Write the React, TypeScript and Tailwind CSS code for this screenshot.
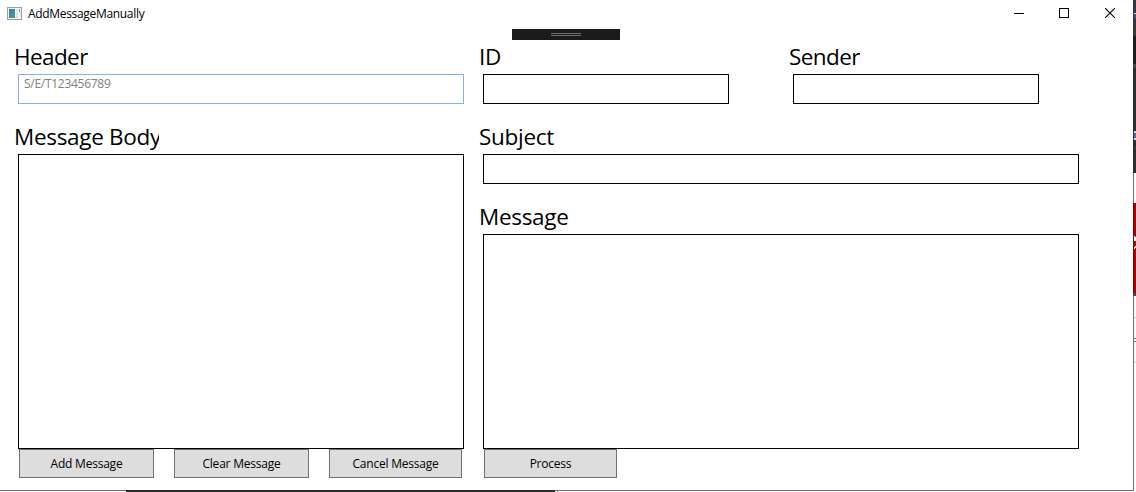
import type { ReactNode } from "react";

function Field({ label, tracking, children }: { label: string; tracking: string; children: ReactNode }) {
  return (
    <label className="flex flex-col">
      <span className={`-ml-1 h-8 self-start overflow-hidden whitespace-nowrap text-[22.5px] leading-[29px] ${tracking}`}>{label}</span>
      {children}
    </label>
  );
}

function ActionButton({ label, width }: { label: string; width: string }) {
  return (
    <button className={`h-[29px] border border-[#707070] bg-[#dddddd] text-[12px] leading-none tracking-[-0.22px] whitespace-nowrap ${width}`}>
      {label}
    </button>
  );
}

function TitleBar() {
  return (
    <header className="flex h-[29px] shrink-0 items-start justify-between">
      <div className="flex items-center gap-[6px] pt-[5px] pl-[7px]">
        <svg width="15" height="13" viewBox="0 0 15 13" shapeRendering="crispEdges">
          <defs>
            <linearGradient id="pane" x1="0" y1="0" x2="1" y2="1">
              <stop offset="0" stopColor="#3d72b8" />
              <stop offset="1" stopColor="#4aa58a" />
            </linearGradient>
          </defs>
          <rect x=".5" y=".5" width="14" height="12" fill="#f3f3f3" stroke="#9b9fa1" />
          <rect x="2" y="2" width="6" height="9" fill="url(#pane)" />
          <rect x="9" y="2" width="2" height="9" fill="#dfe3e6" />
          <rect x="12" y="2" width="1" height="3" fill="#56a58a" />
        </svg>
        <h1 className="text-[12px] leading-[17px] tracking-[-0.32px]">AddMessageManually</h1>
      </div>
      <div className="flex pr-[2px]">
        <button aria-label="Minimize" className="flex h-[26px] w-[45px] items-center justify-center">
          <svg width="10" height="10" shapeRendering="crispEdges"><rect y="5" width="10" height="1" /></svg>
        </button>
        <button aria-label="Maximize" className="flex h-[26px] w-[45px] items-center justify-center">
          <svg width="10" height="10" shapeRendering="crispEdges"><rect x=".5" y=".5" width="9" height="9" fill="none" stroke="#000" /></svg>
        </button>
        <button aria-label="Close" className="flex h-[26px] w-[45px] items-center justify-center pl-[2px]">
          <svg width="10" height="10"><path d="M0 0L10 10M10 0L0 10" stroke="#000" strokeWidth="1.1" /></svg>
        </button>
      </div>
    </header>
  );
}

function BackgroundEdge() {
  return (
    <svg width="3" height="492" className="relative -ml-px shrink-0" shapeRendering="crispEdges">
      <rect x="1" width="2" height="492" fill="#f5f5fb" />
      <rect width="3" height="36" fill="#37383c" />
      <rect y="36" width="3" height="28" fill="#1b1c1f" />
      <rect y="64" width="3" height="109" fill="#2d2d30" />
      <rect y="64" width="3" height="4" fill="#44444a" />
      <rect x="1" y="13" width="2" height="1" fill="#ddd" />
      <rect x="1" y="14" width="2" height="5" fill="#3c4a91" />
      <rect x="1" y="131" width="2" height="2" fill="#c3d8e5" />
      <rect x="1" y="133" width="2" height="5" fill="#5369ad" />
      <rect x="1" y="138" width="2" height="2" fill="#d9d9cc" />
      <rect x="1" y="148" width="2" height="1" fill="#46464a" />
      <rect x="1" y="173" width="2" height="30" fill="#fff" />
      <rect y="203" width="3" height="90" fill="#b00000" />
      <rect y="203" width="1" height="90" fill="#7d0000" />
      <path d="M1 236L3 238V241H1ZM1 249V247L3 245V248Z" fill="#fff" />
      <rect y="293" width="3" height="3" fill="#444" />
      <rect x="1" y="317" width="2" height="1" fill="#d4d4d8" />
      <rect x="1" y="338" width="2" height="1" fill="#77777d" />
      <rect x="1" y="341" width="2" height="1" fill="#77777d" />
      <rect x="1" y="362" width="2" height="1" fill="#d4d4d8" />
      <rect x="1" y="363" width="2" height="129" fill="#fff" />
    </svg>
  );
}

export default function App() {
  const box = "block resize-none rounded-none border border-black bg-white outline-none";
  return (
    <div className="flex h-[492px] w-[1136px] overflow-hidden bg-white font-['Open_Sans','Noto_Sans',sans-serif] text-black">
      <div className="flex w-[1134px] shrink-0 flex-col">
        <div className="relative flex h-[491px] flex-col border-r border-b border-[#707070]">
          <TitleBar />
          <div className="absolute top-[29px] left-[512px] flex h-[11px] w-[108px] flex-col items-center gap-px bg-[#1b1b1c] pt-1">
            <i className="block h-px w-[30px] bg-[#6f6f6f]" />
            <i className="block h-px w-[30px] bg-[#6f6f6f]" />
          </div>
          <main className="flex gap-[19px] pt-[13px] pl-[18px]">
            <section className="flex w-[446px] flex-col">
              <div className="flex flex-col gap-[18px]">
                <Field label="Header" tracking="tracking-[-0.6px]">
                  <input className="h-[30px] border border-[#7eb4ea] bg-white px-[5px] pb-[11px] text-[12px] leading-4 tracking-[-0.28px] outline-none placeholder:text-[#808080] placeholder:opacity-100" placeholder="S/E/T123456789" />
                </Field>
                <Field label="Message Body" tracking="w-[145px] tracking-[-0.3px]">
                  <textarea className={`${box} h-[295px]`} />
                </Field>
              </div>
              <div className="flex gap-5 pl-px">
                <ActionButton label="Add Message" width="w-[135px]" />
                <ActionButton label="Clear Message" width="w-[135px]" />
                <ActionButton label="Cancel Message" width="w-[133px]" />
              </div>
            </section>
            <section className="flex w-[596px] flex-col">
              <div className="flex flex-col gap-[18px]">
                <div className="flex gap-16">
                  <Field label="ID" tracking="tracking-[-0.3px]">
                    <input className={`${box} h-[30px] w-[246px]`} />
                  </Field>
                  <Field label="Sender" tracking="tracking-[-0.6px]">
                    <input className={`${box} h-[30px] w-[246px]`} />
                  </Field>
                </div>
                <Field label="Subject" tracking="tracking-[-0.3px]">
                  <input className={`${box} h-[30px]`} />
                </Field>
                <Field label="Message" tracking="tracking-[-0.3px]">
                  <textarea className={`${box} h-[215px]`} />
                </Field>
              </div>
              <div className="flex pl-px">
                <ActionButton label="Process" width="w-[133px]" />
              </div>
            </section>
          </main>
        </div>
        <div className="relative -mt-px flex h-[2px] items-end pl-[126px]">
          <div className="h-[2px] w-[429px] bg-[#2b292c]" />
          <div className="ml-[2px] h-px w-px bg-[#999999]" />
        </div>
      </div>
      <BackgroundEdge />
    </div>
  );
}
